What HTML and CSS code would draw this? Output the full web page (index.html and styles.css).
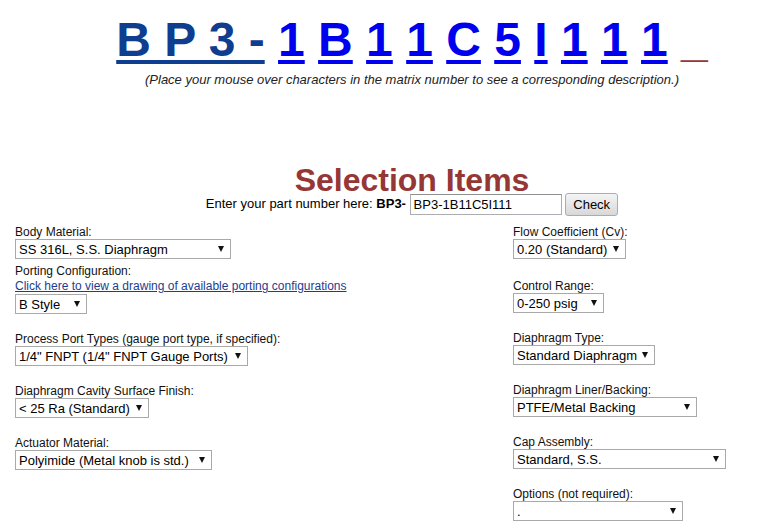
FILE: index.html
```html
<!DOCTYPE html>
<html>
    <head>
        <meta name="viewport" content="width=device-width" />
        <link rel="stylesheet" href="styles.css">
    </head>
    <body>
        <div class="head">
            <div class="matrix"><a class="fixed" href="#">B P 3 -</a> <a href="#">1</a> <a href="#">B</a> <a href="#">1</a> <a href="#">1</a> <a href="#">C</a> <a href="#">5</a> <a href="#">I</a> <a href="#">1</a> <a href="#">1</a> <a href="#">1</a> <span class="blank">_</span></div>
            <div class="hint">(Place your mouse over characters in the matrix number to see a corresponding description.)</div>
            <div class="desc"></div>
            <h1>Selection Items</h1>
            <form class="part">Enter your part number here: <b>BP3-</b> <input type="text" value="BP3-1B11C5I111"> <button type="button">Check</button></form>
        </div>

        <div class="items">
            <div class="col">
                <div class="field">
                    <label>Body Material:</label>
                    <span class="pick w-body"><select><option>SS 316L, S.S. Diaphragm</option></select></span>
                </div>
                <div class="field porting">
                    <label>Porting Configuration:</label>
                    <a class="drawing" href="#">Click here to view a drawing of available porting configurations</a>
                    <span class="pick w-style"><select><option>B Style</option></select></span>
                </div>
                <div class="field">
                    <label>Process Port Types (gauge port type, if specified):</label>
                    <span class="pick w-port"><select><option>1/4" FNPT (1/4" FNPT Gauge Ports)</option></select></span>
                </div>
                <div class="field">
                    <label>Diaphragm Cavity Surface Finish:</label>
                    <span class="pick w-finish"><select><option>&lt; 25 Ra (Standard)</option></select></span>
                </div>
                <div class="field">
                    <label>Actuator Material:</label>
                    <span class="pick w-actuator"><select><option>Polyimide (Metal knob is std.)</option></select></span>
                </div>
            </div>
            <div class="col">
                <div class="field">
                    <label>Flow Coefficient (Cv):</label>
                    <span class="pick w-flow"><select><option>0.20 (Standard)</option></select></span>
                </div>
                <div class="field range">
                    <label>Control Range:</label>
                    <span class="pick w-range"><select><option>0-250 psig</option></select></span>
                </div>
                <div class="field">
                    <label>Diaphragm Type:</label>
                    <span class="pick w-type"><select><option>Standard Diaphragm</option></select></span>
                </div>
                <div class="field">
                    <label>Diaphragm Liner/Backing:</label>
                    <span class="pick w-liner"><select><option>PTFE/Metal Backing</option></select></span>
                </div>
                <div class="field">
                    <label>Cap Assembly:</label>
                    <span class="pick w-cap"><select><option>Standard, S.S.</option></select></span>
                </div>
                <div class="field">
                    <label>Options (not required):</label>
                    <span class="pick w-options"><select><option>.</option></select></span>
                </div>
            </div>
        </div>
    </body>
</html>
```

FILE: styles.css
```css
* {box-sizing: border-box;}
html, body {margin: 0; padding: 0; background: #fff;}
body {font-family: "Liberation Sans", Arial, sans-serif; color: #000; overflow: hidden;}

.head {margin-left: 48px; text-align: center;}

.matrix {padding-top: 12px; font-size: 48px; font-weight: bold; line-height: 56px; white-space: nowrap;}
.matrix a {color: #0000ee; text-decoration: underline; text-decoration-thickness: 4px; text-underline-offset: 4px;}
.matrix a.fixed {color: #0f3d8f;}
.matrix .blank {color: #953735;}

.hint {font-size: 13px; font-style: italic; line-height: 15px; color: #222; margin-top: 4px;}
.desc {height: 79px;}

h1 {margin: 0; font-size: 32px; line-height: 28px; color: #953735; font-weight: bold;}

.part {margin: -2px 0 0; font-size: 13px; line-height: 23px;}
.part b {font-weight: bold;}
.part input {width: 152px; height: 21px; padding: 0 3px; border: 1px solid #abadb3; border-top-color: #8e8f8f;
    font: 13px "Liberation Sans", Arial, sans-serif; vertical-align: middle;}
.part button {width: 53px; height: 23px; padding: 0; border: 1px solid #98b0cf; border-radius: 3px;
    background: linear-gradient(#f4f4f4, #e6e6e6 50%, #d8d8d8); font: 13px "Liberation Sans", Arial, sans-serif;
    color: #000; vertical-align: middle;}

.items {display: flex; padding: 9px 0 0 15px;}
.col {display: flex; flex-direction: column; gap: 18px;}
.col:first-child {width: 498px;}
.field {display: flex; flex-direction: column; align-items: flex-start;}
.field label {font-size: 12px; line-height: 14px; color: #111;}
.field.porting {margin-top: -13px;}
.field.range {margin-top: 2px;}
.drawing {font-size: 12px; line-height: 16px; color: #1c3d91; text-decoration: underline;}

.pick {position: relative; display: inline-block;}
.pick::after {content: ""; position: absolute; right: 7px; top: 7px; border-left: 3.5px solid transparent;
    border-right: 3.5px solid transparent; border-top: 6px solid #111;}
.pick select {appearance: none; -webkit-appearance: none; width: 100%; height: 20px; margin: 0; padding: 0 16px 0 3px;
    border: 1px solid #a9a9a9; border-radius: 0; background: #fff; color: #000;
    font: 13px "Liberation Sans", Arial, sans-serif; display: block;}

.w-body {width: 216px;}
.w-style {width: 72px;}
.w-port {width: 233px;}
.w-finish {width: 134px;}
.w-actuator {width: 197px;}
.w-flow {width: 113px;}
.w-range {width: 91px;}
.w-type {width: 142px;}
.w-liner {width: 184px;}
.w-cap {width: 213px;}
.w-options {width: 170px;}
```
